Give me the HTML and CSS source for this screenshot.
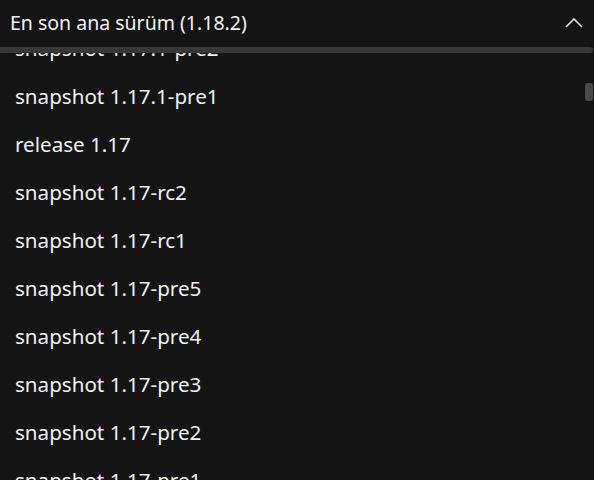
FILE: index.html
```html
<!DOCTYPE html>
<html>
<head>
<meta charset="utf-8">
<link rel="stylesheet" href="styles.css">
</head>
<body>
<div class="dropdown">
  <div class="header">
    <span class="title">En son ana sürüm (1.18.2)</span>
    <svg class="chevron" width="18" height="10" viewBox="0 0 18 10"><path d="M1 9 L9 1 L17 9" fill="none" stroke="#e6e6e6" stroke-width="1.6"/></svg>
  </div>
  <div class="divider"></div>
  <div class="body">
    <ul class="list">
      <li>snapshot 1.17.1-pre2</li>
      <li>snapshot 1.17.1-pre1</li>
      <li>release 1.17</li>
      <li>snapshot 1.17-rc2</li>
      <li>snapshot 1.17-rc1</li>
      <li>snapshot 1.17-pre5</li>
      <li>snapshot 1.17-pre4</li>
      <li>snapshot 1.17-pre3</li>
      <li>snapshot 1.17-pre2</li>
      <li>snapshot 1.17-pre1</li>
    </ul>
    <div class="thumb"></div>
  </div>
</div>
</body>
</html>
```
FILE: styles.css
```css
html, body {
  margin: 0;
  padding: 0;
  background: #141414;
  height: 100%;
  overflow: hidden;
}
.dropdown {
  width: 594px;
  height: 480px;
  display: flex;
  flex-direction: column;
  font-family: "Noto Sans", "Open Sans", sans-serif;
  color: #f2f2f2;
  background: #141414;
}
.header {
  height: 47px;
  flex: none;
  display: flex;
  align-items: center;
  justify-content: space-between;
  padding: 0 11px 0 10px;
  box-sizing: border-box;
}
.title {
  font-size: 19.5px;
  font-weight: 400;
  margin-top: -2px;
}
.chevron {
  display: block;
  margin-top: -1px;
}
.divider {
  height: 6px;
  flex: none;
  background: #383838;
  border-radius: 0 3px 3px 0;
  margin-right: 1px;
}
.body {
  flex: 1;
  position: relative;
  overflow: hidden;
}
.list {
  list-style: none;
  margin: -29px 0 0 0;
  padding: 0;
}
.list li {
  height: 48px;
  display: flex;
  align-items: center;
  padding-left: 15px;
  font-size: 20.6px;
  font-weight: 400;
}
.thumb {
  position: absolute;
  right: 1px;
  top: 30px;
  width: 8px;
  height: 18px;
  border-radius: 3px;
  background: #4a4a4a;
}
```
